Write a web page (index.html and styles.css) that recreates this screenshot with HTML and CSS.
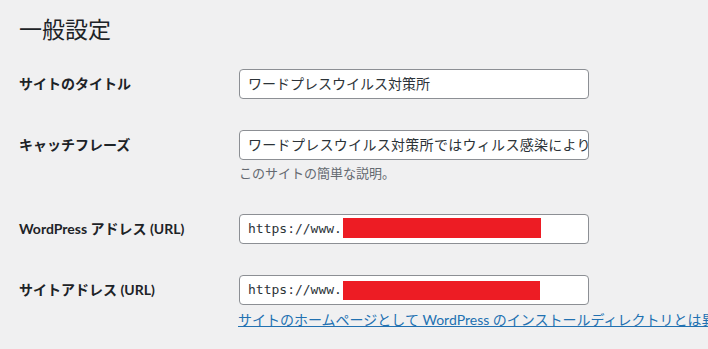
FILE: index.html
```html
<!DOCTYPE html>
<html lang="ja">
<head>
<meta charset="utf-8">
<title>一般設定</title>
<link rel="stylesheet" href="styles.css">
</head>
<body>
<div class="wrap">
  <h1 class="title">一般設定</h1>
  <div class="form-table">
    <div class="row">
      <div class="label">サイトのタイトル</div>
      <div class="field">
        <div class="input">ワードプレスウイルス対策所</div>
      </div>
    </div>
    <div class="row">
      <div class="label">キャッチフレーズ</div>
      <div class="field">
        <div class="input wide">ワードプレスウイルス対策所ではウィルス感染により</div>
        <p class="description">このサイトの簡単な説明。</p>
      </div>
    </div>
    <div class="row">
      <div class="label">WordPress アドレス (URL)</div>
      <div class="field">
        <div class="input code">https://www.<span class="redact r1"></span></div>
      </div>
    </div>
    <div class="row last">
      <div class="label">サイトアドレス (URL)</div>
      <div class="field">
        <div class="input code">https://www.<span class="redact r2"></span></div>
        <p class="help"><a href="#">サイトのホームページとして WordPress のインストールディレクトリとは異</a></p>
      </div>
    </div>
  </div>
</div>
</body>
</html>
```
FILE: styles.css
```css
html, body {
  margin: 0;
  padding: 0;
  background: #f0f0f1;
  overflow: hidden;
}
body {
  font-family: "Lato", "Noto Sans CJK JP", "Noto Sans", sans-serif;
  color: #1d2327;
  font-size: 14px;
}
.wrap {
  padding: 14px 0 0 19px;
}
.title {
  margin: 0;
  font-size: 23px;
  font-weight: 400;
  line-height: 30px;
  color: #1d2327;
}
.form-table {
  margin-top: 10px;
}
.row {
  display: flex;
  align-items: flex-start;
  padding: 15px 0 16px;
}
.label {
  width: 220px;
  flex: none;
  font-weight: 700;
  font-size: 14px;
  line-height: 30px;
  white-space: nowrap;
}
.field {
  flex: none;
  width: 350px;
}
.input {
  position: relative;
  box-sizing: border-box;
  width: 350px;
  height: 30px;
  border: 1px solid #8c8f94;
  border-radius: 4px;
  background: #fff;
  padding: 0 8px;
  font-size: 14px;
  line-height: 28px;
  color: #2c3338;
  white-space: nowrap;
  overflow: hidden;
}
.input.wide {
  letter-spacing: 0.3px;
}
.input.code {
  font-family: "DejaVu Sans Mono", "Liberation Mono", monospace;
  font-size: 13px;
}
.redact {
  position: absolute;
  background: #ed1c24;
}
.r1 {
  left: 103px;
  top: 3px;
  width: 198px;
  height: 20px;
}
.r2 {
  left: 103px;
  top: 5px;
  width: 197px;
  height: 19px;
}
.description {
  margin: 4px 0 0;
  font-size: 13px;
  line-height: 19px;
  color: #646970;
}
.help {
  margin: 4px 0 0 -1px;
  font-size: 14px;
  line-height: 21px;
  white-space: nowrap;
}
.help a {
  color: #2271b1;
  text-decoration: underline;
}
```
